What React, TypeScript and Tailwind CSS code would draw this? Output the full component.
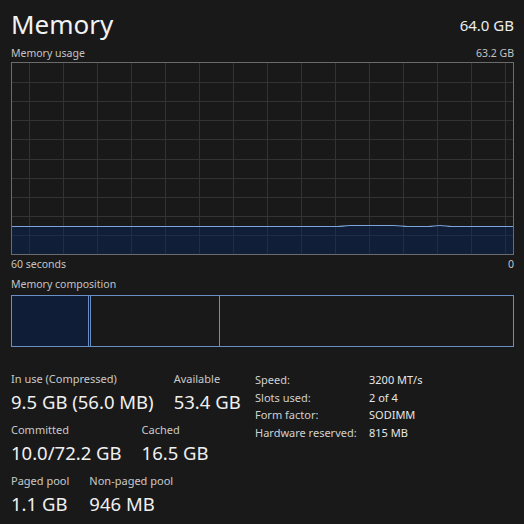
import React from 'react';

const font = { fontFamily: '"Segoe UI", "Noto Sans", "Open Sans", sans-serif' };

function UsageGraph() {
  const w = 501;
  const h = 191;
  const vx = [];
  for (let x = 17; x < w; x += 34) vx.push(x);
  const hy = [];
  for (let i = 1; i < 10; i++) hy.push(Math.round((h / 10) * i) + 0.5);
  const line =
    'M0 163.5 L325 163.5 C330 163.5 332 162.5 338 162.5 L382 162.5 C388 162.5 390 163.5 396 163.5 L416 163.5 C421 163.5 423 162.5 428 162.5 C433 162.5 435 163.5 440 163.5 L501 163.5';
  return (
    <div className="h-[193px] border border-[#6b6b6b]">
      <svg width={w} height={h} className="block">
        {vx.map((x) => (
          <line key={'v' + x} x1={x + 0.5} x2={x + 0.5} y1={0} y2={h} stroke="#333333" strokeWidth={1} />
        ))}
        {hy.map((y) => (
          <line key={'h' + y} x1={0} x2={w} y1={y} y2={y} stroke="#333333" strokeWidth={1} />
        ))}
        <path d={line + ` L${w} ${h} L0 ${h} Z`} fill="#0f1e3a" fillOpacity={0.92} />
        {vx.map((x) => (
          <line key={'vf' + x} x1={x + 0.5} x2={x + 0.5} y1={164} y2={h} stroke="#1f2e48" strokeWidth={1} />
        ))}
        <line x1={0} x2={w} y1={hy[8]} y2={hy[8]} stroke="#1f2e48" strokeWidth={1} />
        <path d={line} fill="none" stroke="#7ea3d8" strokeWidth={1.2} />
      </svg>
    </div>
  );
}

function Stat({ label, value }: { label: string; value: string }) {
  return (
    <div className="flex flex-col">
      <span className="text-[11px] leading-[16px] text-[#c9c9c9]">{label}</span>
      <span className="text-[18.5px] leading-[26px] text-[#f0f0f0] mt-[2px]">{value}</span>
    </div>
  );
}

export default function App() {
  const specs = [
    ['Speed:', '3200 MT/s'],
    ['Slots used:', '2 of 4'],
    ['Form factor:', 'SODIMM'],
    ['Hardware reserved:', '815 MB'],
  ];
  return (
    <div className="w-[524px] h-[524px] bg-[#191919] pl-[11px] pr-[10px] overflow-hidden" style={font}>
      <div className="flex items-end justify-between h-[42px]">
        <span className="text-[26px] leading-[34px] text-[#f2f2f2] mb-[1px]">Memory</span>
        <span className="text-[15px] leading-[22px] text-[#ececec] mb-[6px]">64.0 GB</span>
      </div>
      <div className="flex justify-between items-center h-[20px] pt-[3px] text-[10.5px] text-[#c4c4c4]">
        <span>Memory usage</span>
        <span>63.2 GB</span>
      </div>
      <UsageGraph />
      <div className="flex justify-between items-center h-[20px] text-[10.5px] text-[#c4c4c4]">
        <span>60 seconds</span>
        <span>0</span>
      </div>
      <div className="flex items-center h-[20px] text-[10.5px] text-[#c4c4c4]">Memory composition</div>
      <div className="flex h-[52px] border border-[#6a8fc5]">
        <div className="w-[77px] bg-[#0f1e36] border-r border-[#6a8fc5]" />
        <div className="w-[2px] border-r border-[#6a8fc5]" />
        <div className="w-[129px] border-r border-[#6a8fc5]" />
        <div className="flex-1" />
      </div>
      <div className="flex mt-[24px]">
        <div className="w-[244px] flex flex-col gap-[7px]">
          <div className="flex gap-5">
            <Stat label="In use (Compressed)" value="9.5 GB (56.0 MB)" />
            <Stat label="Available" value="53.4 GB" />
          </div>
          <div className="flex gap-5">
            <Stat label="Committed" value="10.0/72.2 GB" />
            <Stat label="Cached" value="16.5 GB" />
          </div>
          <div className="flex gap-5">
            <Stat label="Paged pool" value="1.1 GB" />
            <Stat label="Non-paged pool" value="946 MB" />
          </div>
        </div>
        <div className="flex flex-col text-[11px] leading-[17.7px] text-[#d0d0d0]">
          {specs.map(([k, v]) => (
            <div key={k} className="flex">
              <span className="w-[114px]">{k}</span>
              <span className="text-[#e6e6e6]">{v}</span>
            </div>
          ))}
        </div>
      </div>
    </div>
  );
}
